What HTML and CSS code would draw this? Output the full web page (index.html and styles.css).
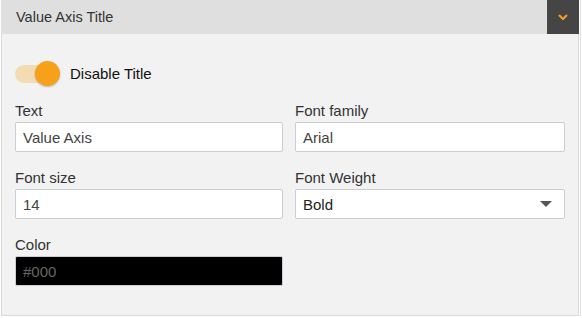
FILE: index.html
```html
<!DOCTYPE html>
<html lang="en">
<head>
<meta charset="UTF-8">
<meta name="viewport" content="width=device-width, initial-scale=1.0">
<title>Value Axis Title</title>
<link rel="stylesheet" href="styles.css">
</head>
<body>
<div class="wrap">
    <div class="panel">
        <div class="panel-header">
            <span class="panel-title">Value Axis Title</span>
            <span class="collapse-btn">
                <svg width="10" height="6" viewBox="0 0 10 6">
                    <path d="M1 1 L5 5 L9 1" fill="none" stroke="#f7a21b" stroke-width="2"/>
                </svg>
            </span>
        </div>
        <div class="panel-body">
            <div class="toggle-row">
                <span class="toggle"><span class="track"></span><span class="knob"></span></span>
                <span class="toggle-label">Disable Title</span>
            </div>
            <div class="fields">
                <div class="field">
                    <label>Text</label>
                    <input class="input" type="text" value="Value Axis">
                </div>
                <div class="field">
                    <label>Font family</label>
                    <input class="input" type="text" value="Arial">
                </div>
                <div class="field">
                    <label>Font size</label>
                    <input class="input" type="text" value="14">
                </div>
                <div class="field">
                    <label>Font Weight</label>
                    <div class="select-wrap">
                        <select class="input select">
                            <option>Bold</option>
                            <option>Normal</option>
                        </select>
                        <svg class="caret" width="12" height="6" viewBox="0 0 12 6">
                            <path d="M0 0 L12 0 L6 6 Z" fill="#555"/>
                        </svg>
                    </div>
                </div>
                <div class="field">
                    <label>Color</label>
                    <input class="input color-input" type="text" value="#000">
                </div>
            </div>
        </div>
    </div>
</div>
</body>
</html>
```

FILE: styles.css
```css
body {
    margin: 0;
    background-color: #fff;
    font-family: "Liberation Sans", Arial, sans-serif;
}
.wrap {
    width: 579px;
    padding-left: 1px;
    border-right: 1px solid #e2e2e2;
}
.panel {
    width: 578px;
}
.panel-header {
    display: flex;
    align-items: center;
    justify-content: space-between;
    height: 34px;
    background-color: #dfdfdf;
}
.panel-title {
    padding-left: 15px;
    font-size: 14.5px;
    color: #333;
}
.collapse-btn {
    display: flex;
    align-items: center;
    justify-content: center;
    width: 32px;
    height: 34px;
    background-color: #454545;
}
.panel-body {
    background-color: #f2f2f2;
    border: 1px solid #d9d9d9;
    border-top: none;
    padding: 27px 13px 29px 13px;
}
.toggle-row {
    display: flex;
    align-items: center;
    gap: 10px;
    height: 25px;
    margin-bottom: 16px;
}
.toggle {
    position: relative;
    display: inline-block;
    width: 45px;
    height: 25px;
}
.track {
    position: absolute;
    left: 0;
    top: 4px;
    width: 40px;
    height: 18px;
    border-radius: 9px;
    background-color: #f4dcb2;
}
.knob {
    position: absolute;
    right: 0;
    top: 0;
    width: 25px;
    height: 25px;
    border-radius: 50%;
    background-color: #f7a11a;
    box-shadow: 0 1px 2px rgba(0,0,0,0.25);
}
.toggle-label {
    font-size: 15px;
    color: #111;
}
.fields {
    display: grid;
    grid-template-columns: 268px 1fr;
    column-gap: 12px;
    row-gap: 17px;
}
.field label {
    display: block;
    font-size: 15px;
    line-height: 17px;
    color: #333;
    margin-bottom: 3px;
}
.input {
    display: block;
    box-sizing: border-box;
    width: 100%;
    height: 30px;
    margin: 0;
    padding: 0 7px;
    border: 1px solid #c9cdd5;
    border-radius: 2px;
    background-color: #fff;
    font-family: "Liberation Sans", Arial, sans-serif;
    font-size: 15px;
    color: #444;
    outline: none;
}
.select-wrap {
    position: relative;
}
.select {
    appearance: none;
    -webkit-appearance: none;
    color: #222;
}
.caret {
    position: absolute;
    right: 13px;
    top: 12px;
    pointer-events: none;
}
.color-input {
    background-color: #000;
    color: #666;
}
```
